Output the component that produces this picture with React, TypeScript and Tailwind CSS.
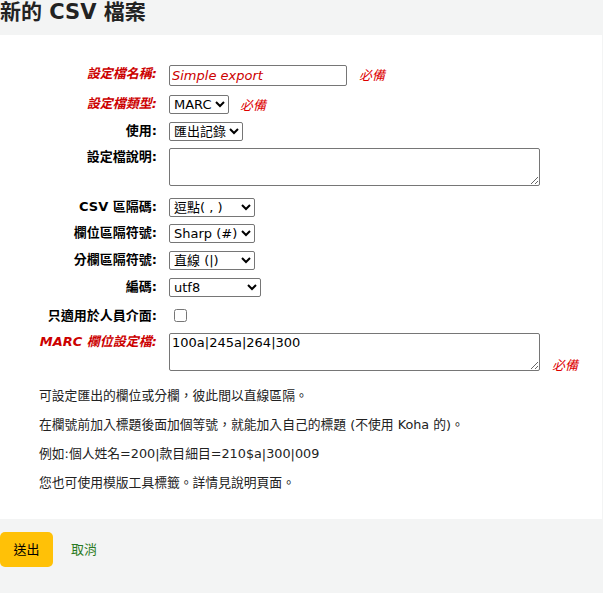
import React from "react";

const FONT = "font-['DejaVu_Sans','Noto_Sans_CJK_TC',sans-serif]";

function Label({ children, required, top = "" }: { children: React.ReactNode; required?: boolean; top?: string }) {
	return (
		<div
			className={`w-[157px] shrink-0 text-right text-[13px] leading-[18px] font-bold ${
				required ? "text-[#cc0000] italic" : "text-black"
			} ${top}`}
		>
			{children}
		</div>
	);
}

function Required({ className = "" }: { className?: string }) {
	return <span className={`text-[13px] italic text-[#dd0000] ${className}`}>必備</span>;
}

function Select({ value, width }: { value: string; width: string }) {
	return (
		<select
			defaultValue={value}
			className={`${width} h-[19px] border border-[#767676] rounded-[2px] bg-white text-[13px] text-black pl-0`}
		>
			<option>{value}</option>
		</select>
	);
}

export default function App() {
	return (
		<div className={`w-[603px] h-[593px] bg-[#f3f4f4] ${FONT} overflow-hidden`}>
			<div className="h-[35px] w-[602px]">
				<h1 className="text-[21px] leading-[24px] font-bold text-[#222]">新的 CSV 檔案</h1>
			</div>

			<div className="w-[602px] h-[484px] bg-white pt-[30px]">
				<div className="flex flex-col">
					<div className="flex gap-[12px] h-[30px]">
						<Label required>設定檔名稱:</Label>
						<input
							defaultValue="Simple export"
							className="w-[178px] h-[21px] border border-[#767676] rounded-[2px] px-[2px] text-[13px] italic text-[#cc0000]"
						/>
						<Required className="mt-[1px]" />
					</div>
					<div className="flex gap-[12px] h-[27px]">
						<Label required>設定檔類型:</Label>
						<Select value="MARC" width="w-[60px]" />
						<Required className="-ml-[1px] mt-[1px]" />
					</div>
					<div className="flex gap-[12px] h-[26px]">
						<Label>使用:</Label>
						<Select value="匯出記錄" width="w-[74px]" />
					</div>
					<div className="flex gap-[12px] h-[50px]">
						<Label>設定檔說明:</Label>
						<textarea className="w-[371px] h-[38px] border border-[#767676] rounded-[2px] text-[13px]" />
					</div>
					<div className="flex gap-[12px] h-[26px]">
						<Label>CSV 區隔碼:</Label>
						<Select value="逗點( , )" width="w-[86px]" />
					</div>
					<div className="flex gap-[12px] h-[27px]">
						<Label>欄位區隔符號:</Label>
						<Select value="Sharp (#)" width="w-[86px]" />
					</div>
					<div className="flex gap-[12px] h-[27px]">
						<Label>分欄區隔符號:</Label>
						<Select value="直線 (|)" width="w-[86px]" />
					</div>
					<div className="flex gap-[12px] h-[27px]">
						<Label>編碼:</Label>
						<Select value="utf8" width="w-[92px]" />
					</div>
					<div className="flex gap-[12px] h-[28px]">
						<Label top="pt-[2px]">只適用於人員介面:</Label>
						<input type="checkbox" className="w-[13px] h-[13px] ml-[5px] mt-[4px]" />
					</div>
					<div className="flex gap-[12px] items-end">
						<Label required top="self-start">
							MARC 欄位設定檔:
						</Label>
						<textarea
							spellCheck={false}
							defaultValue="100a|245a|264|300"
							className="w-[371px] h-[38px] border border-[#767676] rounded-[2px] px-[2px] pt-[1px] text-[13px] leading-[16px] text-black"
						/>
						<Required className="-mb-[4px]" />
					</div>
				</div>

				<div className="pl-[39px] pt-[16px] flex flex-col gap-[11px] text-[12.8px] leading-[18px] text-[#222]">
					<p>可設定匯出的欄位或分欄，彼此間以直線區隔。</p>
					<p>在欄號前加入標題後面加個等號，就能加入自己的標題 (不使用 Koha 的)。</p>
					<p>例如:個人姓名=200|款目細目=210$a|300|009</p>
					<p>您也可使用模版工具標籤。詳情見說明頁面。</p>
				</div>
			</div>

			<div className="h-[74px] w-[602px] pt-[13px] flex items-start gap-[18px]">
				<button className="w-[53px] h-[35px] rounded-[5px] bg-[#ffc107] text-[13px] text-black">送出</button>
				<a href="#" className="mt-[8px] text-[13px] text-[#2a7a22]">
					取消
				</a>
			</div>
		</div>
	);
}
